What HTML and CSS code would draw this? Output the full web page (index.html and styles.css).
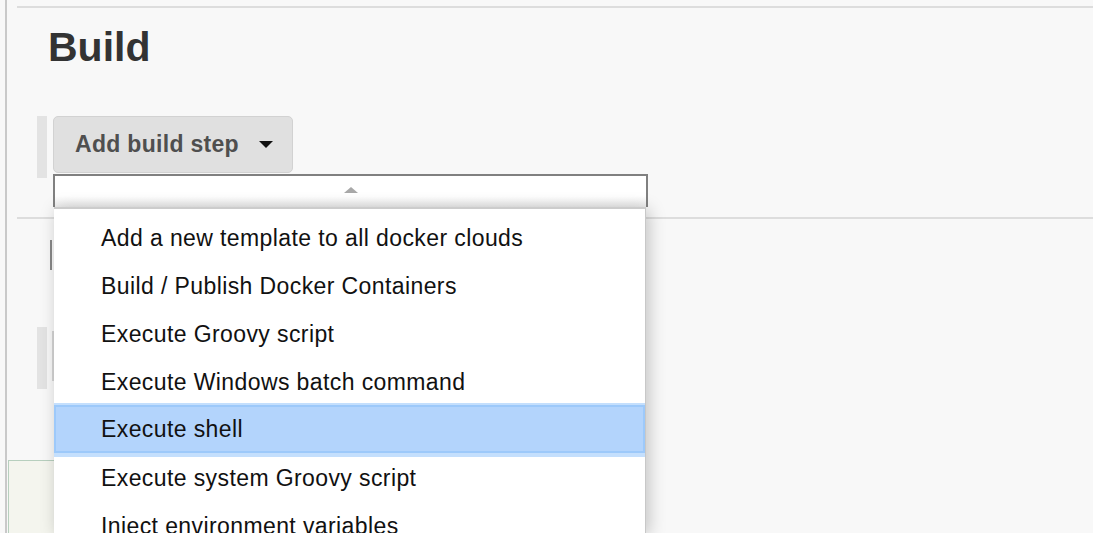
FILE: index.html
```html
<!DOCTYPE html>
<html>
<head>
<meta charset="utf-8">
<link rel="stylesheet" href="styles.css">
</head>
<body>
<div class="page">
  <div class="section">
    <div class="rule"></div>
    <h1 class="title">Build</h1>
    <div class="step-row">
      <div class="handle"></div>
      <button class="add-btn">Add build step <span class="caret"></span></button>
    </div>
    <div class="rule rule-mid"></div>
    <div class="sub-one"><div class="dark-bar"></div></div>
    <div class="sub-two"><div class="handle handle-low"></div><div class="thin-line"></div></div>
  </div>
  <div class="green-box"></div>

  <div class="dropdown">
    <div class="scroll-up"><span class="up-arrow"></span></div>
    <ul class="menu">
      <li class="item">Add a new template to all docker clouds</li>
      <li class="item">Build / Publish Docker Containers</li>
      <li class="item">Execute Groovy script</li>
      <li class="item">Execute Windows batch command</li>
      <li class="item active">Execute shell</li>
      <li class="item">Execute system Groovy script</li>
      <li class="item">Inject environment variables</li>
    </ul>
  </div>
</div>
</body>
</html>
```

FILE: styles.css
```css
html, body {
  margin: 0;
  padding: 0;
  background: #f8f8f8;
  height: 100%;
  overflow: hidden;
}

.page {
  position: relative;
  margin-left: 5px;
  border-left: 2px solid #c9c9c9;
  height: 533px;
  overflow: hidden;
  font-family: "Liberation Sans", Arial, sans-serif;
}

.section {
  margin-left: 10px;
  padding-top: 6px;
}

.rule {
  height: 2px;
  background: #dddddd;
}

.title {
  margin: 15px 0 0 31px;
  font-size: 41px;
  line-height: 48px;
  font-weight: bold;
  color: #333333;
}

.step-row {
  display: flex;
  align-items: flex-start;
  gap: 6px;
  margin-top: 45px;
  padding-left: 20px;
}

.handle {
  width: 10px;
  height: 62px;
  background: #e3e3e3;
}

.add-btn {
  display: flex;
  align-items: center;
  box-sizing: border-box;
  width: 240px;
  height: 57px;
  padding: 0 19px 0 21px;
  border: 1px solid #d2d2d2;
  border-radius: 5px;
  background: #e0e0e0;
  font-family: "Liberation Sans", Arial, sans-serif;
  font-size: 23px;
  font-weight: bold;
  color: #4f4f4f;
  letter-spacing: 0.3px;
}

.caret {
  margin-left: auto;
  width: 0;
  height: 0;
  border-left: 7px solid transparent;
  border-right: 7px solid transparent;
  border-top: 7px solid #111111;
}

.rule-mid {
  margin-top: 39px;
}

.sub-one {
  margin-top: 21px;
  padding-left: 33px;
}

.dark-bar {
  width: 2px;
  height: 30px;
  background: #888888;
}

.sub-two {
  display: flex;
  align-items: flex-start;
  gap: 5px;
  margin-top: 57px;
  padding-left: 20px;
}

.handle-low {
  height: 62px;
}

.thin-line {
  width: 2px;
  height: 50px;
  margin-top: 4px;
  background: #d4d4d4;
}

.green-box {
  margin: 71px 0 0 1px;
  width: 400px;
  height: 100px;
  border: 1.5px solid #b7cfbe;
  background: #f4f5ee;
}

.dropdown {
  position: absolute;
  left: 46px;
  top: 174px;
  width: 595px;
  bottom: 0;
  display: flex;
  flex-direction: column;
}

.scroll-up {
  box-sizing: border-box;
  height: 33px;
  border: 2px solid #808080;
  border-bottom: none;
  background: linear-gradient(to bottom, #ffffff 0, #ffffff 20px, #ececec 31px);
  display: flex;
  justify-content: center;
  padding-top: 11px;
}

.up-arrow {
  width: 0;
  height: 0;
  border-left: 7px solid transparent;
  border-right: 7px solid transparent;
  border-bottom: 6px solid #a8a8a8;
}

.menu {
  list-style: none;
  margin: 0 2px 0 1px;
  padding: 4px 0 0 0;
  flex: 1;
  background: #ffffff;
  border-top: 2px solid #cccccc;
  border-right: 1.5px solid #c8c8c8;
  box-shadow: 3px 2px 16px rgba(0, 0, 0, 0.22);
  overflow: hidden;
}

.item {
  box-sizing: border-box;
  height: 48px;
  padding: 3px 0 0 47px;
  line-height: 45px;
  font-size: 23px;
  letter-spacing: 0.4px;
  color: #111111;
  white-space: nowrap;
}

.item.active {
  background: #b3d4fc;
  border: 2px solid #9dc9fa;
  padding-top: 1px;
  padding-left: 45px;
  line-height: 43px;
  box-shadow: 0 1px 0 3px #c4dffd;
  position: relative;
}
```
